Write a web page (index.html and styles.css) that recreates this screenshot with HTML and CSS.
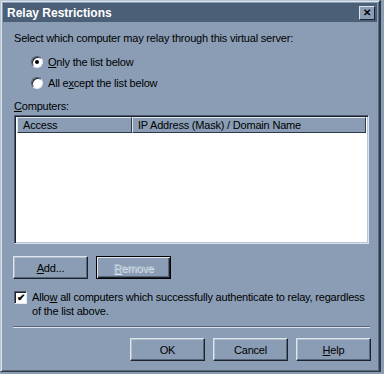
FILE: index.html
```html
<!DOCTYPE html>
<html>
<head>
<meta charset="utf-8">
<title>Relay Restrictions</title>
<link rel="stylesheet" href="styles.css">
</head>
<body>
<div class="window">
  <div class="titlebar">
    <span class="title">Relay Restrictions</span>
    <span class="close">&#x2715;</span>
  </div>
  <div class="content">
    <p class="prompt">Select which computer may relay through this virtual server:</p>
    <div class="radios">
      <label class="radio"><span class="dot on"></span><span><u>O</u>nly the list below</span></label>
      <label class="radio"><span class="dot"></span><span>All e<u>x</u>cept the list below</span></label>
    </div>
    <p class="caption"><u>C</u>omputers:</p>
    <div class="list">
      <div class="head">
        <span class="col col-access">Access</span>
        <span class="col col-ip">IP Address (Mask) / Domain Name</span>
      </div>
      <div class="rows"></div>
    </div>
    <div class="listbtns">
      <span class="btn"><u>A</u>dd...</span>
      <span class="btn disabled"><u>R</u>emove</span>
    </div>
    <label class="check">
      <span class="box">&#x2714;</span>
      <span class="check-text">Allo<u>w</u> all computers which successfully authenticate to relay, regardless<br>of the list above.</span>
    </label>
    <hr class="sep">
    <div class="footer">
      <span class="btn">OK</span>
      <span class="btn">Cancel</span>
      <span class="btn"><u>H</u>elp</span>
    </div>
  </div>
</div>
</body>
</html>
```

FILE: styles.css
```css
body {
  margin: 0;
  background: #8a9db5;
  font-family: 'Liberation Sans', Arial, sans-serif;
  font-size: 11px;
  letter-spacing: -0.2px;
  color: #000;
}

p {
  margin: 0;
}

u {
  text-decoration: underline;
  text-underline-offset: 1px;
}

.window {
  width: 381px;
  height: 372px;
  background: #8a9db5;
  border-top: 1px solid #b7c4d4;
  border-left: 1px solid #b7c4d4;
  border-right: 2px solid #2f3b49;
  border-bottom: 1px solid #2f3b49;
  box-shadow: inset 1px 1px 0 #dde4ec, inset -1px -1px 0 #5b6b80;
  padding: 2px;
  box-sizing: border-box;
}

.titlebar {
  height: 19px;
  background: #4b6077;
  display: flex;
  align-items: center;
  justify-content: space-between;
  padding: 0 2px 0 4px;
}

.title {
  color: #fff;
  font-weight: bold;
  font-size: 12px;
  letter-spacing: 0;
}

.close {
  width: 14px;
  height: 12px;
  background: #8a9db5;
  border-top: 1px solid #dde4ec;
  border-left: 1px solid #dde4ec;
  border-right: 1px solid #1c232c;
  border-bottom: 1px solid #1c232c;
  font-size: 10px;
  font-weight: bold;
  line-height: 12px;
  text-align: center;
}

.content {
  padding: 0 9px 0 11px;
}

.prompt {
  margin-top: 10px;
  line-height: 13px;
}

.radios {
  display: flex;
  flex-direction: column;
  gap: 8px;
  margin: 10px 0 0 17px;
}

.radio {
  display: flex;
  align-items: center;
  gap: 5px;
  height: 13px;
}

.dot {
  width: 12px;
  height: 12px;
  border-radius: 50%;
  background: #fff;
  box-sizing: border-box;
  border: 1px solid;
  border-color: #4b5a6d #e4eaf1 #e4eaf1 #4b5a6d;
  box-shadow: inset 1px 1px 0 #1c232c;
  display: flex;
  align-items: center;
  justify-content: center;
}

.dot.on::after {
  content: "";
  width: 4px;
  height: 4px;
  border-radius: 50%;
  background: #000;
}

.caption {
  margin-top: 11px;
  line-height: 13px;
}

.list {
  margin-top: 2px;
  width: 355px;
  height: 129px;
  box-sizing: border-box;
  border: 1px solid;
  border-color: #4b5a6d #dde4ec #dde4ec #4b5a6d;
  box-shadow: inset 1px 1px 0 #1c232c, inset -1px -1px 0 #b7c4d4;
  background: #fff;
  padding: 1px 2px 2px 2px;
  display: flex;
  flex-direction: column;
}

.head {
  display: flex;
  height: 16px;
  background: #8a9db5;
}

.col {
  display: flex;
  align-items: center;
  box-sizing: border-box;
  padding-left: 5px;
  border-top: 1px solid #dde4ec;
  border-left: 1px solid #dde4ec;
  border-right: 1px solid #2f3b49;
  border-bottom: 1px solid #2f3b49;
}

.col-access {
  width: 115px;
}

.col-ip {
  flex: 1;
}

.rows {
  flex: 1;
}

.listbtns {
  display: flex;
  gap: 8px;
  margin-top: 12px;
  margin-left: -1px;
}

.btn {
  width: 75px;
  height: 23px;
  box-sizing: border-box;
  display: flex;
  align-items: center;
  justify-content: center;
  border: 1px solid;
  border-color: #dde4ec #1c232c #1c232c #dde4ec;
  box-shadow: inset -1px -1px 0 #56667b, inset 1px 1px 0 #b0bdcd;
  background: #8a9db5;
}

.btn.disabled {
  border-color: #000;
  box-shadow: inset 1px 1px 0 #dde4ec, inset -1px -1px 0 #1c232c, inset -2px -2px 0 #56667b;
  color: #adbccd;
  text-shadow: 1px 1px 0 #dde4ec;
}

.check {
  display: flex;
  gap: 5px;
  margin-top: 11px;
  line-height: 14px;
}

.box {
  flex: none;
  width: 13px;
  height: 13px;
  margin-top: 1px;
  box-sizing: border-box;
  background: #fff;
  border: 1px solid;
  border-color: #4b5a6d #e4eaf1 #e4eaf1 #4b5a6d;
  box-shadow: inset 1px 1px 0 #1c232c;
  font-size: 10px;
  line-height: 11px;
  text-align: center;
  font-weight: bold;
}

.check-text {
  white-space: nowrap;
}

.sep {
  margin: 8px 0 0 -1px;
  width: 357px;
  height: 0;
  border: 0;
  border-top: 1px solid #56667b;
  border-bottom: 1px solid #dde4ec;
}

.footer {
  display: flex;
  justify-content: flex-end;
  gap: 8px;
  margin-top: 10px;
  width: 357px;
}
```
